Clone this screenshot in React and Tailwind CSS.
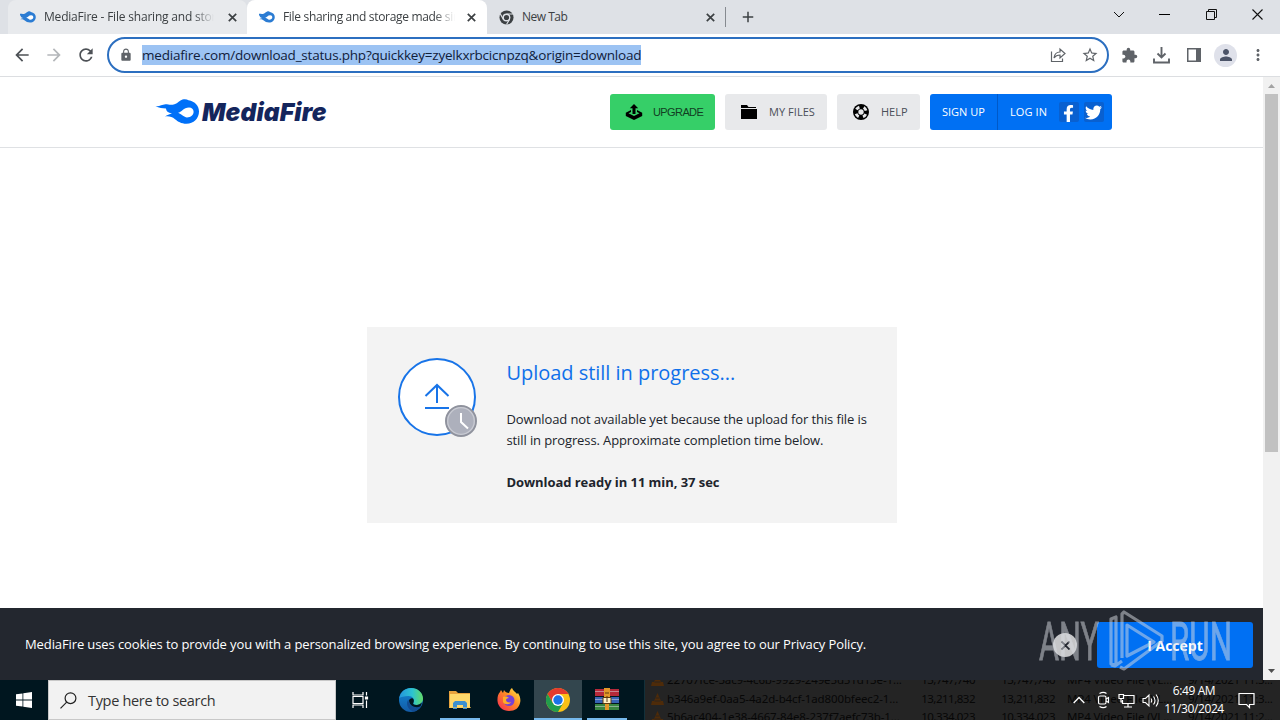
import React from "react";
import { MdArrowBack, MdArrowForward, MdRefresh, MdLock, MdStarBorder, MdExtension, MdPerson, MdMoreVert, MdAdd } from "react-icons/md";
import { FaFacebookF, FaTwitter } from "react-icons/fa";

function Flame({ className, color = "#0070f8", viewBox = "0 0 44 25" }) {
  return (
    <svg className={className} viewBox={viewBox} fill={color}>
      <path fillRule="evenodd" d="M0 7.2C4 8 6 5.500 10 5.300c3 0 5 1.200 9 0C22.500 4.200 24 1.500 27 .5c2.500-.7 4.500-.3 6 .8C39.500 2.500 43.500 7 43.500 12.500 43.500 19.500 38 24.700 31 24.700c-5.500 0-8.500-2.300-11.500-4.500-3-2.200-5.500-3.200-10-2.700C11.500 16 14 15 16.500 14.500 12.500 14 10.500 12 10.500 9.500 7 9.300 3.500 9 0 7.200Z" />
      <path fill="#fff" d="M22.500 13.800c3.500-.3 5.500-5.200 11-5.200 2.800 0 4.600 1.900 4.600 4.200 0 3.200-2.800 5.600-6.600 5.600-3.200 0-4.500-3-9-4.600Z" />
    </svg>
  );
}

function CloseX({ className }) {
  return (
    <svg className={className} width="9" height="9" viewBox="0 0 9 9" stroke="#3c4043" strokeWidth="1.7">
      <path d="M.8.8 8.200 8.200M8.200.8.8 8.200" />
    </svg>
  );
}

function TabStrip() {
  return (
    <div className="flex h-[34px] shrink-0 bg-[#dee1e6] pl-2 text-[12px] tracking-[-0.32px] text-[#3c4043]">
      <div className="flex w-[239px] items-center rounded-t-lg bg-[#e8eaed] pl-3">
        <Flame className="h-4 w-4 shrink-0" color="#2b7cd3" viewBox="9 0 35 25" />
        <div className="ml-2 w-[170px] overflow-hidden whitespace-nowrap tracking-[-0.2px] [mask-image:linear-gradient(to_right,#000_88%,transparent)]">MediaFire - File sharing and storage made simple</div>
        <CloseX className="ml-[14px]" />
      </div>
      <div className="flex w-[240px] items-center rounded-t-lg bg-white pl-3">
        <Flame className="h-4 w-4 shrink-0" color="#2b7cd3" viewBox="9 0 35 25" />
        <div className="ml-2 w-[172px] overflow-hidden whitespace-nowrap [mask-image:linear-gradient(to_right,#000_88%,transparent)]">File sharing and storage made simple</div>
        <CloseX className="ml-[12px]" />
      </div>
      <div className="flex w-[239px] items-center border-r border-[#868a90] pl-3 [border-image:linear-gradient(to_bottom,transparent_8px,#868a90_8px,#868a90_26px,transparent_26px)_1]">
        <svg width="15" height="15" viewBox="0 0 16 16">
          <circle cx="8" cy="8" r="7.500" fill="#3c4043" />
          <circle cx="8" cy="8" r="3.500" fill="#3c4043" stroke="#dee1e6" strokeWidth="1.500" />
          <path d="M8 4.200h7M4.700 10 1.300 4M11.200 10 8 15.500" stroke="#dee1e6" strokeWidth="1.200" />
        </svg>
        <div className="ml-2 w-[184px] tracking-[-0.5px]">New Tab</div>
        <CloseX />
      </div>
      <MdAdd className="mt-[8px] ml-[13px] h-[18px] w-[18px] text-[#3c4043]" />
      <div className="ml-auto flex items-start pt-[9px] pr-[17px]">
        <svg className="mr-[34px]" width="12" height="12" viewBox="0 0 12 12" fill="none" stroke="#111"><path d="m1 3 5 5 5-5" /></svg>
        <svg className="mr-[36px]" width="11" height="12" viewBox="0 0 11 12"><path d="M0 5h11v1H0z" /></svg>
        <svg className="mr-[35px]" width="11" height="11" viewBox="0 0 11 11" fill="none" stroke="#111"><path d="M.5 2.500h8v8h-8zM2.500 2.500v-2h8v8h-2" /></svg>
        <svg width="11" height="11" viewBox="0 0 11 11" fill="none" stroke="#111" strokeWidth="1.100"><path d="m.5.5 10 10m0-10-10 10" /></svg>
      </div>
    </div>
  );
}

function Toolbar() {
  return (
    <div className="flex h-[43px] shrink-0 items-center border-b border-[#dcdee1] bg-white pl-[12px] text-[#5f6368]">
      <MdArrowBack className="h-5 w-5 text-[#4d5156]" />
      <MdArrowForward className="ml-3 h-5 w-5 text-[#b4b7ba]" />
      <MdRefresh className="ml-3 h-5 w-5 text-[#4d5156]" />
      <div className="ml-[11px] flex h-[36px] w-[1002px] items-center rounded-full border-2 border-[#2c6fc0] pl-[10px]">
        <MdLock className="h-[14px] w-[14px]" />
        <span className="ml-[9px] bg-[#9cc3f3] text-[13.5px] leading-[20px] tracking-[-0.21px] whitespace-nowrap text-[#10203a]">mediafire.com/download_status.php?quickkey=zyelkxrbcicnpzq&amp;origin=download</span>
        <svg className="ml-auto" width="16" height="16" viewBox="0 0 16 16" fill="none" stroke="#5f6368" strokeWidth="1.200">
          <path d="M1.500 4.500v10h11v-3M4 11c.5-4 3-6 6-6V2l5 4.500L10 11V8C7.500 8 5.500 8.800 4 11Z" />
        </svg>
        <MdStarBorder className="mr-[8px] ml-[15px] h-[18px] w-[18px]" />
      </div>
      <MdExtension className="ml-[12px] h-[17px] w-[17px]" />
      <svg className="ml-[15px]" width="17" height="17" viewBox="0 0 17 17" fill="none" stroke="#5f6368" strokeWidth="1.900">
        <path d="M8.500 0v10M4.500 6.500l4 4 4-4M1 11.500v4h15v-4" />
      </svg>
      <svg className="ml-[17px]" width="14" height="14" viewBox="0 0 14 14"><path fill="#5f6368" fillRule="evenodd" d="M0 0h14v14H0zM1.500 1.500v11h7.500v-11z" /></svg>
      <div className="ml-[13px] flex h-[23px] w-[23px] items-center justify-center rounded-full bg-[#dfe1ea]"><MdPerson className="h-[18px] w-[18px] text-[#4c5468]" /></div>
      <MdMoreVert className="ml-[12px] h-[18px] w-[18px]" />
    </div>
  );
}

function SiteHeader() {
  return (
    <header className="flex h-[71px] shrink-0 items-start border-b border-[#dfe1e4] pt-[17px] pl-[155px] text-[11px] text-[#4a4f58]">
      <div className="flex h-[35px] w-[455px] items-center">
        <Flame className="h-[25px] w-[45px]" />
        <span className="ml-[2px] pt-[2px] font-['Inter',sans-serif] text-[24.5px] leading-none font-black tracking-[0.15px] text-[#14255c] italic">MediaFire</span>
      </div>
      <div className="flex h-[36px] w-[105px] items-center rounded-[3px] bg-[#36cf68] pl-[15px] text-[#123d22]">
        <svg width="18" height="18" viewBox="0 0 18 18" fill="#000">
          <path d="M9 1 4.800 5.200H7.500V11h3V5.200h2.700zM6 7 .8 9.700V13L9 17l8.200-4V9.700L12 7v2l2.500 1.200L9 13l-5.500-2.800L6 9z" />
        </svg>
        <span className="ml-[10px] font-['Liberation_Sans',sans-serif] tracking-[-0.6px]">UPGRADE</span>
      </div>
      <div className="ml-[10px] flex h-[36px] w-[102px] items-center rounded-[3px] bg-[#e8e9eb] pl-[16px]">
        <svg width="16" height="14" viewBox="0 0 16 14"><path d="M0 0h6l1.500 2H15v1H0zM0 4h16v10H0z" /></svg>
        <span className="ml-[12px] tracking-[0.05px]">MY FILES</span>
      </div>
      <div className="ml-[10px] flex h-[36px] w-[83px] items-center rounded-[3px] bg-[#e8e9eb] pl-[16px]">
        <svg width="16" height="16" viewBox="0 0 16 16">
          <circle cx="8" cy="8" r="8" />
          <circle cx="8" cy="8" r="5.200" fill="none" stroke="#e8e9eb" strokeWidth="2.800" strokeDasharray="3.700 4.468" strokeDashoffset="-2.200" />
          <circle cx="8" cy="8" r="2.700" fill="#e8e9eb" />
        </svg>
        <span className="ml-[12px]">HELP</span>
      </div>
      <div className="ml-[10px] flex h-[36px] w-[182px] items-center rounded-[3px] bg-[#0070f3] text-white">
        <span className="flex h-full w-[68px] items-center border-r border-[#0059c8] pl-[12px]">SIGN UP</span>
        <span className="w-[61px] pl-[12px] tracking-[0.1px]">LOG IN</span>
        <span className="flex h-[20px] w-[20px] items-end justify-center rounded-[2px] bg-[#0960d0] pr-[2px]"><FaFacebookF className="h-[17px] w-[17px]" /></span>
        <span className="ml-[5px] flex h-[20px] w-[20px] items-center justify-center rounded-[2px] bg-[#0960d0] pt-px pr-[2px]"><FaTwitter className="h-[17px] w-[17px]" /></span>
      </div>
    </header>
  );
}

function UploadCard() {
  return (
    <section className="mx-auto mt-[179px] flex h-[196px] w-[530px] bg-[#f3f3f3] pl-[30px] text-[13px] leading-[21px] text-[#20242c]">
      <svg className="mt-[30px] shrink-0" width="82" height="82" viewBox="0 0 82 82" fill="none">
        <circle cx="40" cy="40" r="38" fill="#fff" stroke="#1874e8" strokeWidth="2" />
        <path d="M40 46V28M28.500 39 40 28l11.500 11M28 51h24" stroke="#1874e8" strokeWidth="2" />
        <circle cx="64" cy="64" r="15" fill="#adb0bc" stroke="#8f929d" strokeWidth="2" />
        <circle cx="64" cy="64" r="13.300" stroke="#c9cbd3" strokeWidth="1.300" />
        <path d="M64 56v9l7 6.500" stroke="#fff" strokeWidth="2" />
      </svg>
      <div className="ml-[28px] whitespace-nowrap">
        <h1 className="mt-[32px] text-[20px] leading-[28px] tracking-[-0.03px] text-[#0f70ea]">Upload still in progress...</h1>
        <p className="mt-[22px] tracking-[-0.11px]">Download not available yet because the upload for this file is<br />still in progress. Approximate completion time below.</p>
        <p className="mt-[21px] font-bold tracking-[-0.06px]">Download ready in 11 min, 37 sec</p>
      </div>
    </section>
  );
}

function Watermark() {
  return (
    <svg className="pointer-events-none absolute top-[2px] left-[1036px] opacity-50" width="200" height="62" viewBox="0 0 200 62" fill="none" stroke="#d9dce2">
      <g fill="#d9dce2" strokeWidth="0.8" fontFamily="Roboto, sans-serif" fontSize="53">
        <text x="3" y="50" textLength="60" lengthAdjust="spacingAndGlyphs">ANY</text>
        <text x="134" y="50" textLength="62" lengthAdjust="spacingAndGlyphs">RUN</text>
      </g>
      <path strokeWidth="3.200" strokeLinejoin="round" d="M86 48V4l2-2 38 24v5L88 59l-4-2M75 54V9l5-2v48zM91 46V15l27 17zM75 55l4 1 7-5" />
    </svg>
  );
}

function CookieBar() {
  return (
    <div className="relative mt-auto flex h-[72px] shrink-0 items-center bg-[#23272f] pt-[2px] pl-[25px] text-[13px] text-white">
      <span className="w-[1028px] tracking-[-0.106px] whitespace-nowrap">MediaFire uses cookies to provide you with a personalized browsing experience. By continuing to use this site, you agree to our Privacy Policy.</span>
      <span className="flex h-6 w-6 items-center justify-center rounded-full bg-[#c5c6c8]">
        <svg width="9" height="9" viewBox="0 0 9 9" stroke="#23272f" strokeWidth="1.800"><path d="m.5.5 8 8m0-8-8 8" /></svg>
      </span>
      <button className="ml-[20px] h-[46px] w-[156px] rounded-[3px] bg-[#0070f3] text-[14px] font-bold">I Accept</button>
      <Watermark />
    </div>
  );
}

function Scrollbar() {
  return (
    <div className="flex w-[17px] flex-col items-center bg-[#f1f1f1]">
      <svg width="17" height="17" viewBox="0 0 17 17"><path fill="#a3a3a3" d="M5 11h7L8.500 7z" /></svg>
      <div className="h-[358px] w-[13px] bg-[#c1c1c1]" />
      <svg className="mt-auto" width="17" height="17" viewBox="0 0 17 17"><path fill="#505050" d="M5 6h7l-3.500 4z" /></svg>
    </div>
  );
}

const rows = [
  ["22707fce-3ac9-4c6b-9929-249e5d51d13e-1...", "13,747,740", "9/14/2021 11:3..."],
  ["b346a9ef-0aa5-4a2d-b4cf-1ad800bfeec2-1...", "13,211,832", "9/14/2021 11:3..."],
  ["5b6ac404-1e38-4667-84e8-237f7aefc73b-1...", "10,334,023", "9/14/2021 11:2..."],
];

function FileRows() {
  return (
    <div className="h-[40px] w-[636px] overflow-hidden border-l border-[#12303a] bg-[#242424] font-['Noto_Sans',sans-serif] text-[11.5px] leading-[18.5px] whitespace-nowrap text-[#070707]">
      <div className="-mt-[9px]">
        {rows.map((r) => (
          <div key={r[0]} className="flex h-[18.5px] items-center pl-[6px]">
            <svg width="13" height="12" viewBox="0 0 13 12"><path fill="#4e2b09" d="M6.500 0 10 8h2l1 4H0l1-4h2z" /><path stroke="#2c241c" d="M4.500 5h4M3.500 8h6" /></svg>
            <span className="ml-[3px] w-[244px] tracking-[-0.13px]">{r[0]}</span>
            <span className="w-[64px] text-right tracking-[-0.5px]">{r[1]}</span>
            <span className="w-[80px] text-right tracking-[-0.5px]">{r[1]}</span>
            <span className="ml-[12px] w-[121px] tracking-[-0.1px]">MP4 Video File (VL...</span>
            <span className="tracking-[-0.3px]">{r[2]}</span>
          </div>
        ))}
      </div>
    </div>
  );
}

function AppSlot({ className = "w-[49px]", line = "", children }) {
  return (
    <div className={"flex h-[40px] flex-col items-center justify-between pt-[8px] " + className}>
      {children}
      <div className={"h-[2px] " + line} />
    </div>
  );
}

function ChromeLogo() {
  return (
    <svg width="24" height="24" viewBox="0 0 24 24">
      <circle cx="12" cy="12" r="12" fill="#fbc116" />
      <path fill="#e33b2e" d="M1.600 6A12 12 0 0 1 22.400 6H12L6.800 15z" />
      <path fill="#229d4c" d="M1.600 6A12 12 0 0 0 12 24l5.200-9H6.800z" />
      <circle cx="12" cy="12" r="6" fill="#fff" />
      <circle cx="12" cy="12" r="4.700" fill="#1a73e8" />
    </svg>
  );
}

function Taskbar() {
  return (
    <div className="relative flex h-[40px] shrink-0 bg-[#00161f]">
      <div className="flex w-[48px] items-center justify-center">
        <svg width="16" height="16" viewBox="0 0 16 16" fill="#fff"><path d="M0 2.300 6.500 1.400v6.200H0zM7.300 1.300 16 0v7.600H7.300zM0 8.400h6.500v6.200L0 13.700zM7.300 8.400H16V16l-8.700-1.300z" /></svg>
      </div>
      <div className="flex w-[288px] items-center border border-[#c8c8c8] bg-[#f2f2f2] pl-[11px]">
        <svg width="17" height="17" viewBox="0 0 17 17" fill="none" stroke="#222" strokeWidth="1.200"><circle cx="10.500" cy="6.200" r="5.400" /><path d="M6.700 10.200.5 16.400" /></svg>
        <span className="ml-[11px] pt-[2px] text-[14.5px] tracking-[-0.32px] text-[#333]">Type here to search</span>
      </div>
      <div className="flex w-[49px] items-center justify-center">
        <svg width="17" height="16" viewBox="0 0 17 16" fill="none" stroke="#fff" strokeWidth="1.200"><path d="M1 0v3h10V0M1 16v-3h10v3M1 4.500h10v7H1zM14.500 0v3.500M14.500 8.500V16" /><path fill="#fff" d="M13.500 5h2v2h-2z" /></svg>
      </div>
      <AppSlot className="w-[51px]">
        <svg width="24" height="24" viewBox="0 0 24 24">
          <defs>
            <linearGradient id="edgeTop"><stop stopColor="#2494dc" /><stop offset=".55" stopColor="#2cc3d2" /><stop offset="1" stopColor="#63db66" /></linearGradient>
            <linearGradient id="edgeLow" x2="0" y2="1"><stop stopColor="#1287d4" /><stop offset="1" stopColor="#135ba6" /></linearGradient>
          </defs>
          <circle cx="12" cy="12" r="12" fill="url(#edgeLow)" />
          <path fill="url(#edgeTop)" d="M.2 10C1.500 3.500 6.500 0 12 0c7 0 12 5 12 10.500 0 4-3 6.500-6.500 6.500-3 0-4-1-3-2.500 1.500-3.500-1-6.500-5-6.500C5 8 2 9 .2 10Z" />
          <path fill="#124c92" d="M9.500 11.500C6.500 14 8 22 15 23.600c3-.8 5.500-2.700 7-5.600-7 3-12.500 0-12.500-6.500Z" />
          <path fill="#00161f" d="M14.500 14.500c-1 1.500 0 2.500 3 2.500 2 0 4-.8 5.200-2.400-.1 2-.7 3-1.500 3.800-4.700 2-10.700-.1-11.200-5.900.5-1.500 2-2.500 3.500-2.200 1.500.8 1.700 2.800 1 4.200Z" />
        </svg>
      </AppSlot>
      <AppSlot className="w-[48px]" line="w-[40px] bg-[#76b9ed]">
        <svg className="mt-[2px]" width="22" height="20" viewBox="0 0 22 20">
          <path fill="#e8a33d" d="M0 1h7l2 2h12v15H0z" /><path fill="#ffd96b" d="M1 4h20v14H1z" /><path fill="#3c91d0" d="M4 19v-6l2-2h10l2 2v6h-4v-4H8v4z" /><path fill="#f6c652" d="M0 17h22v1H0z" opacity=".6" />
        </svg>
      </AppSlot>
      <AppSlot className="w-[50px]">
        <svg width="24" height="24" viewBox="0 0 24 24">
          <defs><linearGradient id="fox" x1="1" y1="0" x2="0" y2="1"><stop stopColor="#fff04b" /><stop offset=".45" stopColor="#ff8a24" /><stop offset="1" stopColor="#f72357" /></linearGradient></defs>
          <path fill="url(#fox)" d="M3 4l1-2 2 3 1-3c1 2 3 3 5 3 1-2 1-4 3-5 1 3 4 4 5 6l1-1c2 3 3 7 2 10-1 5-5 8-11 8S1 19 .5 13C.3 9 1 6 3 4Z" />
          <circle cx="12" cy="12.500" r="5.500" fill="#7641d4" /><path fill="#ffad27" d="M6 9c3-1 5 0 6 1-2 0-3 1-3 2 0 2 3 3 5 2-1 3-7 3-8 0z" />
        </svg>
      </AppSlot>
      <AppSlot className="w-[48px] bg-[#33464e]" line="w-[48px] bg-[#76b9ed]"><ChromeLogo /></AppSlot>
      <AppSlot className="w-[50px]" line="w-[40px] bg-[#76b9ed]">
        <svg width="24" height="24" viewBox="0 0 24 24">
          <path fill="#b5293a" d="M0 1h24v7H0z" /><path fill="#3863b4" d="M0 9h24v6H0z" /><path fill="#388541" d="M0 16h24v6H0z" />
          <path fill="#d9dce3" opacity=".5" d="M0 3h24v1H0zM0 11h24v1H0zM0 18h24v1H0z" />
          <path fill="#e29829" d="M9 0h6v9H9zM10 16h4v6h-4z" /><path fill="#fff2c5" stroke="#5d3a10" d="M8 9.500h8v6H8z" /><path stroke="#5d3a10" d="M12 8v6M10 5h4" />
        </svg>
      </AppSlot>
      <div className="w-[12px]" />
      <FileRows />
      <div className="absolute top-0 right-0 flex h-[40px] items-center pr-[25px] text-white">
        <svg width="12" height="8" viewBox="0 0 12 8" fill="none" stroke="#fff" strokeWidth="1.300"><path d="m.7 7 5.300-5.500L11.300 7" /></svg>
        <svg className="ml-[12px]" width="13" height="18" viewBox="0 0 13 18" fill="none" stroke="#fff" strokeWidth="1.200"><rect x="1.500" y="5" width="7.500" height="8" rx="1.500" /><path d="M9 8l2.500-1.500v5L9 10M2.500 2.500c2.500-1.500 5-1.500 7 0M2.500 15.500c2.500 1.500 5 1.500 7 0" /></svg>
        <svg className="ml-[8px]" width="17" height="15" viewBox="0 0 17 15" fill="none" stroke="#fff" strokeWidth="1.200"><path d="M6 2.500h10v8H4.500V7M10 10.500V14M6 14h8M1 1.500h4.500v4H1zM3 5.500V9h2" /></svg>
        <svg className="ml-[7px]" width="18" height="15" viewBox="0 0 18 15" fill="none" stroke="#fff" strokeWidth="1.100"><path d="M1 5.500h2.500L7 2v11L3.500 9.500H1zM9 5.500q1.500 2 0 4M11.500 3.500q3 4 0 8M14 1.500q4.500 6 0 12" /></svg>
        <div className="ml-[2px] flex w-[64px] flex-col items-center pb-px text-[12px] leading-[18px] tracking-[-0.4px] whitespace-nowrap"><span>6:49 AM</span><span>11/30/2024</span></div>
        <svg className="ml-[12px]" width="17" height="17" viewBox="0 0 17 17" fill="none" stroke="#fff" strokeWidth="1.200"><path d="M1 1.500h15v11h-4.500v3l-3-3H1z" /></svg>
      </div>
    </div>
  );
}

export default function App() {
  return (
    <div className="flex h-[720px] w-[1280px] flex-col overflow-hidden bg-white font-['Open_Sans',sans-serif]">
      <TabStrip />
      <Toolbar />
      <div className="flex h-[603px] shrink-0">
        <main className="flex w-[1263px] flex-col">
          <SiteHeader />
          <UploadCard />
          <CookieBar />
        </main>
        <Scrollbar />
      </div>
      <Taskbar />
    </div>
  );
}
